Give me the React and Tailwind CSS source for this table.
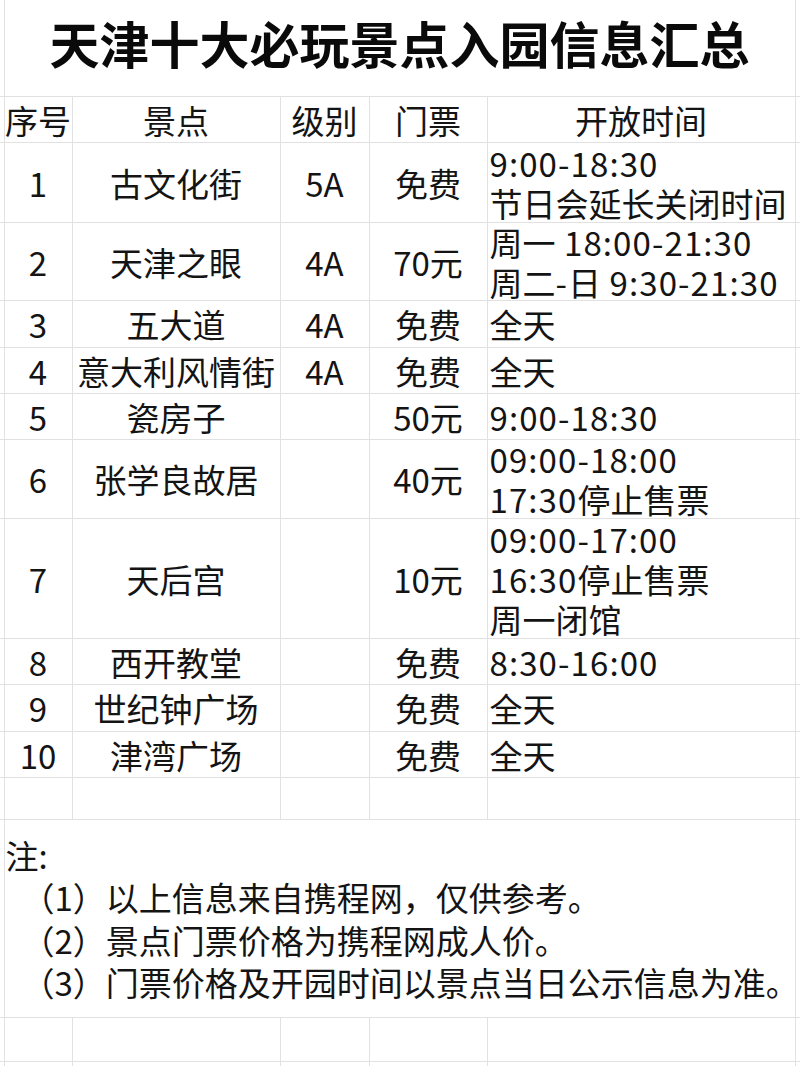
import React from "react";

const B = "border border-[#e1e1e1] p-0";
const font = { fontFamily: '"Noto Sans CJK SC", "Noto Sans", sans-serif' };

const rows = [
  { h: "h-[79px]", n: "1", name: "古文化街", lvl: "5A", price: "免费", time: ["9:00-18:30", "节日会延长关闭时间"] },
  { h: "h-[77px]", n: "2", name: "天津之眼", lvl: "4A", price: "70元", time: ["周一 18:00-21:30", "周二-日 9:30-21:30"] },
  { h: "h-[46px]", n: "3", name: "五大道", lvl: "4A", price: "免费", time: ["全天"] },
  { h: "h-[45px]", n: "4", name: "意大利风情街", lvl: "4A", price: "免费", time: ["全天"] },
  { h: "h-[45px]", n: "5", name: "瓷房子", lvl: "", price: "50元", time: ["9:00-18:30"] },
  { h: "h-[78px]", n: "6", name: "张学良故居", lvl: "", price: "40元", time: ["09:00-18:00", "17:30停止售票"] },
  { h: "h-[119px]", n: "7", name: "天后宫", lvl: "", price: "10元", time: ["09:00-17:00", "16:30停止售票", "周一闭馆"] },
  { h: "h-[45px]", n: "8", name: "西开教堂", lvl: "", price: "免费", time: ["8:30-16:00"] },
  { h: "h-[46px]", n: "9", name: "世纪钟广场", lvl: "", price: "免费", time: ["全天"] },
  { h: "h-[45px]", n: "10", name: "津湾广场", lvl: "", price: "免费", time: ["全天"] },
];

function Spaced({ text }) {
  const parts = text.split(/([\x20-\x7e]+)/).filter(Boolean);
  return (
    <>
      {parts.map((p, i) =>
        /^[\x20-\x7e]+$/.test(p) ? (
          <span key={i} className="tracking-[1.1px]">
            {p}
          </span>
        ) : (
          <span key={i}>{p}</span>
        )
      )}
    </>
  );
}

function Box({ h, center = true, children, extra = "" }) {
  return (
    <div
      className={`${h} flex flex-col justify-center ${center ? "items-center" : "items-start"} overflow-visible ${extra}`}
    >
      {children}
    </div>
  );
}

function EmptyRow({ h }) {
  return (
    <tr>
      <td className={`${B} border-l-0`}>
        <div className={h} />
      </td>
      <td className={B} />
      <td className={B} />
      <td className={B} />
      <td className={B} />
      <td className={B} />
      <td className={`${B} border-r-0`} />
    </tr>
  );
}

export default function App() {
  return (
    <div className="w-[800px] h-[1066px] overflow-hidden bg-white text-[#141414]" style={font}>
      <table className="border-collapse table-fixed w-[800px] text-[33px] leading-[40px]">
        <colgroup>
          <col className="w-[4px]" />
          <col className="w-[68px]" />
          <col className="w-[208px]" />
          <col className="w-[89px]" />
          <col className="w-[118px]" />
          <col className="w-[308px]" />
          <col className="w-[5px]" />
        </colgroup>
        <tbody>
          <tr>
            <td className={`${B} border-l-0 border-t-0`} />
            <td colSpan={5} className={`${B} border-t-0`}>
              <Box h="h-[96px]">
                <div className="text-[50px] leading-[60px] font-bold text-[#0a0a0a] -mt-[12px] whitespace-nowrap">
                  天津十大必玩景点入园信息汇总
                </div>
              </Box>
            </td>
            <td className={`${B} border-r-0 border-t-0`} />
          </tr>
          <tr>
            <td className={`${B} border-l-0`} />
            <td className={B}>
              <Box h="h-[45px]"><span className="whitespace-nowrap">序号</span></Box>
            </td>
            <td className={B}><Box h="h-[45px]">景点</Box></td>
            <td className={B}><Box h="h-[45px]">级别</Box></td>
            <td className={B}><Box h="h-[45px]">门票</Box></td>
            <td className={B}><Box h="h-[45px]">开放时间</Box></td>
            <td className={`${B} border-r-0`} />
          </tr>
          {rows.map((r) => (
            <tr key={r.n}>
              <td className={`${B} border-l-0`} />
              <td className={B}><Box h={r.h}>{r.n}</Box></td>
              <td className={B}>
                <Box h={r.h}><span className="whitespace-nowrap">{r.name}</span></Box>
              </td>
              <td className={B}><Box h={r.h}>{r.lvl}</Box></td>
              <td className={B}><Box h={r.h}>{r.price}</Box></td>
              <td className={B}>
                <Box h={r.h} center={false} extra="pl-[2px] whitespace-nowrap">
                  {r.time.map((t, i) => (
                    <div key={i}>
                      <Spaced text={t} />
                    </div>
                  ))}
                </Box>
              </td>
              <td className={`${B} border-r-0`} />
            </tr>
          ))}
          <EmptyRow h="h-[41px]" />
          <tr>
            <td className={`${B} border-l-0`} />
            <td colSpan={5} className={B}>
              <Box h="h-[197px]" center={false} extra="pl-[1px] leading-[42.5px] whitespace-nowrap">
                <div>注:</div>
                <div className="pl-[16px]">（1）以上信息来自携程网，仅供参考。</div>
                <div className="pl-[16px]">（2）景点门票价格为携程网成人价。</div>
                <div className="pl-[16px]">（3）门票价格及开园时间以景点当日公示信息为准。</div>
              </Box>
            </td>
            <td className={`${B} border-r-0`} />
          </tr>
          <EmptyRow h="h-[43px]" />
          <EmptyRow h="h-[20px]" />
        </tbody>
      </table>
    </div>
  );
}
